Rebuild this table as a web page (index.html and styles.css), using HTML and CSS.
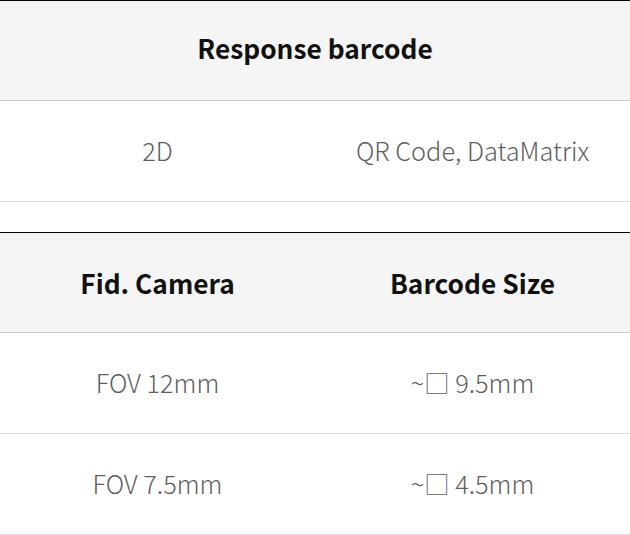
FILE: index.html
```html
<!DOCTYPE html>
<html lang="en">
<head>
<meta charset="utf-8">
<title>Spec</title>
<link rel="stylesheet" href="styles.css">
</head>
<body>
<div class="spec">
  <div class="row head">
    <div class="cell full">Response barcode</div>
  </div>
  <div class="row body">
    <div class="cell">2D</div>
    <div class="cell">QR Code, DataMatrix</div>
  </div>
</div>
<div class="spec second">
  <div class="row head">
    <div class="cell">Fid. Camera</div>
    <div class="cell">Barcode Size</div>
  </div>
  <div class="row body">
    <div class="cell">FOV 12mm</div>
    <div class="cell">~□ 9.5mm</div>
  </div>
  <div class="row body">
    <div class="cell">FOV 7.5mm</div>
    <div class="cell">~□ 4.5mm</div>
  </div>
</div>
</body>
</html>
```
FILE: styles.css
```css
html, body {
  margin: 0;
  padding: 0;
  background: #fff;
}
body {
  font-family: "Noto Sans CJK KR", "Noto Sans", sans-serif;
  width: 630px;
}
.spec {
  border-top: 1px solid #000;
}
.second {
  margin-top: 30px;
}
.row {
  display: grid;
  grid-template-columns: 1fr 1fr;
}
.cell {
  display: flex;
  align-items: center;
  justify-content: center;
  padding-bottom: 3px;
}
.full {
  grid-column: 1 / 3;
  padding-bottom: 6px;
}
.head {
  height: 99px;
  background: #f5f5f5;
  border-bottom: 1px solid #ccc;
  color: #111;
  font-weight: 700;
  font-size: 26.3px;
}
.second .head .cell {
  padding-bottom: 0;
}
.body {
  height: 100px;
  border-bottom: 1px solid #ddd;
  color: #5e5e5e;
  font-weight: 300;
  font-size: 25.3px;
}
```
